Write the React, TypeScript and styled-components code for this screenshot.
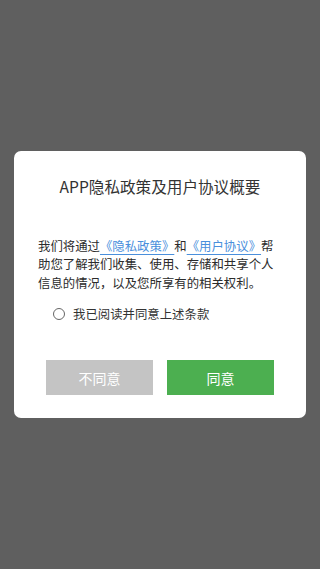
import styled, { createGlobalStyle } from 'styled-components';

const GlobalStyle = createGlobalStyle`
    html, body {
        margin: 0;
        padding: 0;
        background: #5f5f5f;
    }
    body {
        font-family: "Noto Sans CJK SC", "Noto Sans", sans-serif;
    }
`;

const Screen = styled.main`
    display: flex;
    align-items: center;
    justify-content: center;
    height: 569px;
    padding: 0 14px;
    box-sizing: border-box;
`;

const Dialog = styled.section`
    width: 100%;
    box-sizing: border-box;
    background: #ffffff;
    border-radius: 7px;
    padding: 24px 24px 23px;
    display: flex;
    flex-direction: column;
`;

const Title = styled.h2`
    margin: 0;
    font-size: 15.6px;
    font-weight: 400;
    line-height: 22px;
    color: #333333;
    text-align: center;
`;

const Body = styled.p`
    margin: 40px 0 0;
    font-size: 12.4px;
    line-height: 18.5px;
    color: #2b2b2b;
`;

const Link = styled.a`
    color: #4a8fdc;
    text-decoration: underline;
    text-underline-offset: 3px;
`;

const AgreeRow = styled.label`
    display: flex;
    align-items: center;
    gap: 8px;
    margin: 12px 0 0 15px;
    height: 20px;
    font-size: 12.4px;
    color: #333333;
`;

const Radio = styled.span`
    width: 10px;
    height: 10px;
    border: 1.5px solid #666666;
    border-radius: 50%;
`;

const Actions = styled.div`
    display: flex;
    justify-content: center;
    gap: 14px;
    margin-top: 36px;
`;

const Button = styled.button<{ primary?: boolean }>`
    width: 107px;
    height: 35px;
    border: none;
    padding: 0;
    font-family: inherit;
    font-size: 14px;
    color: #ffffff;
    background: ${(props) => (props.primary ? '#4caf50' : '#c4c4c4')};
`;

export default function App() {
    return (
        <>
            <GlobalStyle />
            <Screen>
                <Dialog>
                    <Title>APP隐私政策及用户协议概要</Title>
                    <Body>
                        我们将通过<Link>《隐私政策》</Link>和<Link>《用户协议》</Link>帮助您了解我们收集、使用、存储和共享个人信息的情况，以及您所享有的相关权利。
                    </Body>
                    <AgreeRow>
                        <Radio />
                        我已阅读并同意上述条款
                    </AgreeRow>
                    <Actions>
                        <Button>不同意</Button>
                        <Button primary>同意</Button>
                    </Actions>
                </Dialog>
            </Screen>
        </>
    );
}
